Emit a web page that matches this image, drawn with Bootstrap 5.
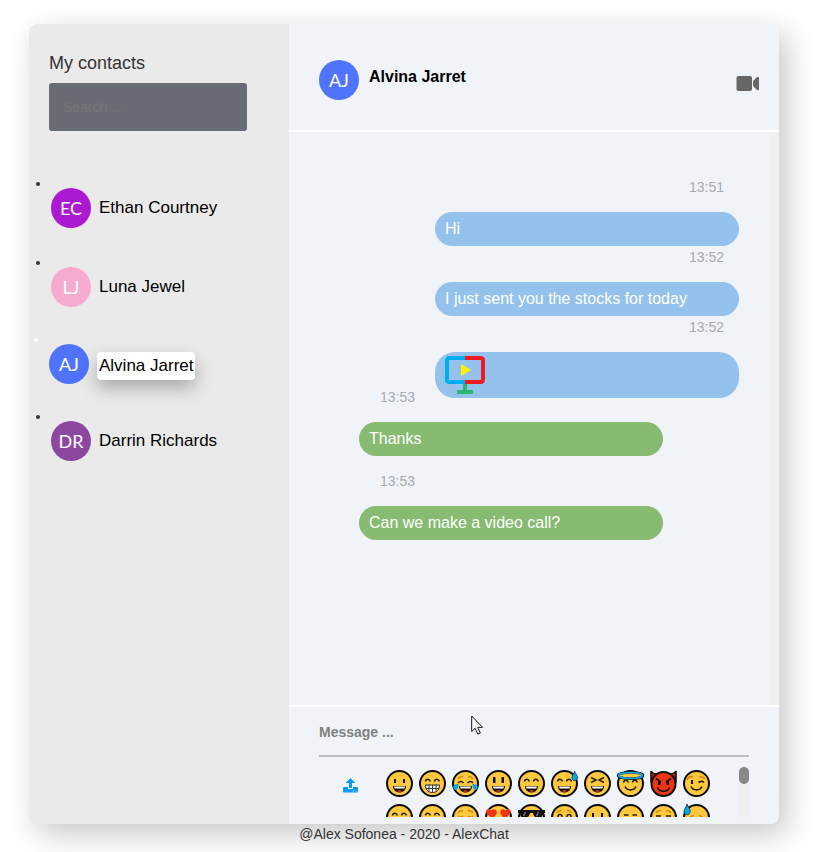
<!DOCTYPE html>
<html lang="en">
<head>
<meta charset="utf-8">
<meta name="viewport" content="width=device-width, initial-scale=1">
<title>AlexChat</title>
<link href="https://cdn.jsdelivr.net/npm/bootstrap@5.3.0/dist/css/bootstrap.min.css" rel="stylesheet">
<style>
body{font-family:"Liberation Sans",Arial,sans-serif;font-size:14px;line-height:20px;color:#333;background:#fff}
.page{padding:24px 43px 8px 29px}
.chat-app{border-radius:8px;box-shadow:8px 10px 30px rgba(0,0,0,.22);background:#f0f4f9;min-height:800px}
.contacts{flex:0 0 260px;background:#eaeaea;border-radius:8px 0 0 8px;padding:29px 20px 20px}
.contacts h1{font-size:18px;line-height:20px;font-weight:400;margin-bottom:10px}
.search{height:48px;width:198px;border:0;border-radius:3px;background:#6a6c75;padding:0 14px;font-size:14px;color:#fff}
.search::placeholder{color:#757575;opacity:1}
.people{margin-top:55px;gap:35px}
.people li{position:relative}
.people a{font-size:17px;line-height:24px;color:#000;gap:8px;padding:2px}
.people li::before{content:"";position:absolute;left:-13px;top:-4px;width:4px;height:4px;border-radius:50%;background:#333}
.people li.current::before{left:-15px;background:#fff;top:-6px}
.people .current a{padding:0}
.people .current .person{background:#fff;padding:2px;border-radius:4px;margin-top:4px;box-shadow:0 8px 18px rgba(0,0,0,.28)}
.avatar{flex:none;width:40px;height:40px;border-radius:50%;color:#fff;font:18px/40px Lato,"Open Sans",sans-serif;text-align:center}
.a-ec{background:#ab1ad1}.a-lj{background:#f7abd0}.a-aj{background:#4f74fb}.a-dr{background:#8c479f}
.chat-head{padding:36px 20px 30px 30px;border-bottom:2px solid #fff;gap:10px}
.chat-head h2{font-size:16px;line-height:20px;font-weight:700;color:#000;margin:7px 0 0}
.video{margin-top:14px;color:#666}
.history{border-right:10px solid #f0f0f0;padding:45px 30px 30px 70px}
.time{color:#a8aab1;margin:0 15px 15px 21px}
.bubble{width:80%;border-radius:20px;padding:5px 10px;font-size:16px;line-height:24px;color:#fff}
.sent{margin-bottom:1px}
.sent .bubble{background:#94c2ed}
.sent.media{margin-bottom:-11px}
.media .bubble{padding:4px 10px 2px}
.received{margin-bottom:15px}
.received .bubble{background:#86bb71}
.composer{border-top:2px solid #fff;padding:10px 30px 7px}
.message{width:100%;height:40px;border:0;border-bottom:2px solid #bfbdbe;background:transparent;padding:0 0 8px;font-size:14px;font-weight:700;color:#444;border-radius:0}
.message::placeholder{color:#808080;opacity:1}
.tools{height:50px;margin-top:10px;overflow:hidden}
.upload{margin:11px 28px 0 24px;color:#0a98ff}
.emojis{display:grid;grid-template-columns:repeat(auto-fill,27px);gap:7px 6px;padding-top:3px;flex:1 1 0}
.emojis button{width:27px;height:27px}
.emojis svg{display:block;width:27px;height:27px;overflow:visible}
.track{width:10px;background:#f0f0f0}
.thumb{height:17px;border-radius:5px;background:#888}
.pointer{position:absolute;left:182px;top:8px}
button{border:0;background:none;padding:0}
</style>
<script src="https://cdn.jsdelivr.net/npm/bootstrap@5.3.0/dist/js/bootstrap.bundle.min.js"></script>
</head>
<body>
<svg width="0" height="0" class="position-absolute" aria-hidden="true">
<defs>
<g id="face"><circle cx="13.5" cy="13.5" r="12.5" fill="#ffc83d" stroke="#0c0c0c" stroke-width="2"/></g>
<g id="grin"><path d="M7 16h13c0 4-3 6.500-6.500 6.500S7 20 7 16z" fill="#111"/><path d="M8 16.500h11l-.6 2H8.600z" fill="#fff"/><path d="M11 21.300c1-1.500 4-1.500 5 0-1 .7-4 .7-5 0z" fill="#ef3a18"/></g>
<g id="arcs" fill="none" stroke="#222" stroke-width="1.500"><path d="M6.500 11.500c.5-3 4-3 5 0M15.500 11.500c.5-3 4-3 5 0"/></g>
<g id="brows" fill="none" stroke="#d08a10" stroke-width="1.500"><path d="M6 9c1-2 3-2.500 5-2.500M16 6.500c2 0 4 .5 5 2.500"/></g>
<g id="smile"><path d="M8 16.500c2 4.500 9 4.500 11 0" fill="none" stroke="#222" stroke-width="1.600"/></g>
</defs>
</svg>
<div class="page">
<main class="chat-app d-flex">
  <aside class="contacts">
    <h1><label for="search">My contacts</label></h1>
    <input class="search" id="search" type="text" placeholder="Search ...">
    <ul class="people list-unstyled d-flex flex-column mb-0">
      <li><a href="#" class="d-flex align-items-center text-decoration-none"><span class="avatar a-ec">EC</span><span class="person">Ethan Courtney</span></a></li>
      <li><a href="#" class="d-flex align-items-center text-decoration-none"><span class="avatar a-lj">LJ</span><span class="person">Luna Jewel</span></a></li>
      <li class="current"><a href="#" class="d-flex align-items-center text-decoration-none" aria-current="true"><span class="avatar a-aj">AJ</span><span class="person">Alvina Jarret</span></a></li>
      <li><a href="#" class="d-flex align-items-center text-decoration-none"><span class="avatar a-dr">DR</span><span class="person">Darrin Richards</span></a></li>
    </ul>
  </aside>
  <section class="flex-grow-1 d-flex flex-column">
    <header class="chat-head d-flex align-items-start">
      <span class="avatar a-aj">AJ</span>
      <h2>Alvina Jarret</h2>
      <button class="video ms-auto" type="button" aria-label="Video call"><svg class="d-block" width="23" height="20" viewBox="0 0 23 20" fill="currentColor"><rect x=".5" y="2" width="15.500" height="15" rx="2"/><path d="M17 7.200 20.700 3.200Q23 1.800 23 4v11q0 2.200-2.300.8L17 11.800z"/></svg></button>
    </header>
    <div class="history flex-grow-1 d-flex flex-column">
      <div class="sent d-flex flex-column align-items-end"><time class="time">13:51</time><div class="bubble">Hi</div></div>
      <div class="sent d-flex flex-column align-items-end"><time class="time">13:52</time><div class="bubble">I just sent you the stocks for today</div></div>
      <div class="sent media d-flex flex-column align-items-end"><time class="time">13:52</time><div class="bubble"><svg class="d-block" width="40" height="40" viewBox="0 0 40 40" role="img" aria-label="Video"><path d="M18 27h4v7h6v4H12v-4h6z" fill="#2bb673"/><path d="M20 2H4.500Q2 2 2 4.500v19Q2 26 4.500 26H20" fill="none" stroke="#00aeef" stroke-width="4"/><path d="M20 2h15.500Q38 2 38 4.500v19q0 2.500-2.500 2.500H20" fill="none" stroke="#ed1c24" stroke-width="4"/><path d="M16 8v12l10-6z" fill="#fff200"/></svg></div></div>
      <div class="received"><time class="time d-block">13:53</time><div class="bubble">Thanks</div></div>
      <div class="received"><time class="time d-block">13:53</time><div class="bubble">Can we make a video call?</div></div>
    </div>
    <footer class="composer position-relative">
      <input class="message d-block" type="text" placeholder="Message ..." aria-label="Message">
      <div class="tools d-flex">
        <button class="upload align-self-start" type="button" aria-label="Upload file"><svg class="d-block" width="15" height="15" viewBox="0 0 15 15" fill="currentColor"><path d="M7.500 0 12.300 5H9v5H6V5H2.700z"/><path d="M1 9h4v2h5V9h4q1 0 1 1v3.500q0 1-1 1H1q-1 0-1-1V10q0-1 1-1z"/><path d="M10 12.500h1v1h-1zM12.500 12.500h1v1h-1z" fill="#f0f4f9"/></svg></button>
        <div class="emojis">
          <button type="button" aria-label="Grinning"><svg viewBox="0 0 27 27"><use href="#face"/><path d="M8 9h2v4H8zM17 9h2v4h-2z" fill="#111"/><use href="#grin"/></svg></button>
          <button type="button" aria-label="Beaming"><svg viewBox="0 0 27 27"><use href="#face"/><use href="#arcs"/><path d="M6.500 15h14c0 5-3 7.500-7 7.500s-7-2.500-7-7.500z" fill="#fff" stroke="#222"/><path d="M7 18.500h13M10 15v6.500M13.500 15v7M17 15v6.500" stroke="#333"/></svg></button>
          <button type="button" aria-label="Tears of joy"><svg viewBox="0 0 27 27"><use href="#face"/><use href="#brows"/><path d="M6 13c2-2 4-2 5.500 0M15.500 13c2-2 4-2 5.500 0" fill="none" stroke="#222" stroke-width="1.500"/><use href="#grin"/><path d="M1.500 19c-1-4 2-5 5-5 0 3-1 6-3 6zM25.500 19c1-4-2-5-5-5 0 3 1 6 3 6z" fill="#00a8f3"/></svg></button>
          <button type="button" aria-label="Big eyes"><svg viewBox="0 0 27 27"><use href="#face"/><path d="M8 7h2.500v6H8zM16.500 7H19v6h-2.500z" fill="#111"/><use href="#grin"/></svg></button>
          <button type="button" aria-label="Smiling eyes"><svg viewBox="0 0 27 27"><use href="#face"/><use href="#arcs"/><use href="#grin"/></svg></button>
          <button type="button" aria-label="Sweat"><svg viewBox="0 0 27 27"><use href="#face"/><use href="#arcs"/><use href="#grin"/><path d="M23.500 1c1 3 3.500 4.500 3 7.500-1 3.500-6 2.500-5.500-1C21.200 5 23 3.500 23.500 1z" fill="#00a8f3" stroke="#111" stroke-width=".6"/></svg></button>
          <button type="button" aria-label="Squinting"><svg viewBox="0 0 27 27"><use href="#face"/><path d="m7 7.500 5 2.500-5 2.500M20 7.500 15 10l5 2.500" fill="none" stroke="#222" stroke-width="1.500"/><use href="#grin"/></svg></button>
          <button type="button" aria-label="Halo"><svg viewBox="0 0 27 27"><use href="#face"/><ellipse cx="13.500" cy="5.500" rx="12.500" ry="3.300" fill="#ffc83d" stroke="#111" stroke-width="2.600"/><ellipse cx="13.500" cy="5.500" rx="12" ry="3" fill="none" stroke="#00a8f3" stroke-width="1.700"/><g transform="translate(0 1)"><use href="#arcs"/></g><use href="#smile"/></svg></button>
          <button type="button" aria-label="Devil"><svg viewBox="0 0 27 27"><path d="M1 11V1c1 2 4 3 7 3zM26 11V1c-1 2-4 3-7 3z" fill="#b52411" stroke="#111" stroke-width="1.600"/><circle cx="13.500" cy="14" r="12" fill="#ef3516" stroke="#111" stroke-width="2"/><path d="m6 8.500 5 3.500M21 8.500l-5 3.500" stroke="#111" stroke-width="1.600"/><path d="M8 11h2.500v4H8zM16.500 11H19v4h-2.500z" fill="#111"/><path d="M7.500 17.500c2 5 10 5 12 0" fill="none" stroke="#111" stroke-width="1.600"/></svg></button>
          <button type="button" aria-label="Wink"><svg viewBox="0 0 27 27"><use href="#face"/><path d="M4 10c1-3 3-4 6-3M16 7c2-1 4 0 6 2" fill="none" stroke="#d08a10" stroke-width="1.600"/><path d="M8 10h2v4H8z" fill="#111"/><path d="M15.500 12.500c2-1.500 4-1.500 5.500 0" fill="none" stroke="#222" stroke-width="1.600"/><use href="#smile"/></svg></button>
          <button type="button" aria-label="Blushing"><svg viewBox="0 0 27 27"><use href="#face"/><use href="#arcs"/><use href="#smile"/></svg></button>
          <button type="button" aria-label="Savoring"><svg viewBox="0 0 27 27"><use href="#face"/><use href="#arcs"/><use href="#smile"/></svg></button>
          <button type="button" aria-label="Relieved"><svg viewBox="0 0 27 27"><use href="#face"/><use href="#brows"/><path d="M6 12c2 1.500 4 1.500 5 0M16 12c2 1.500 4 1.500 5 0" fill="none" stroke="#d08a10" stroke-width="1.500"/><use href="#smile"/></svg></button>
          <button type="button" aria-label="Heart eyes"><svg viewBox="0 0 27 27"><use href="#face"/><path d="M7.500 15 2 10C-.5 5 4.500 3.500 6.500 6.500 9 3.500 13 6 11.500 10zM19.500 15 25 10c2.500-5-2.500-6.500-4.500-3.500C18 3.500 14 6 15.500 10z" fill="#ef3516"/></svg></button>
          <button type="button" aria-label="Sunglasses"><svg viewBox="0 0 27 27"><use href="#face"/><path d="M0 6h27v3h-2c0 7-9 7-10 0h-3c-1 7-10 7-10 0H0z" fill="#111"/><path d="m5.500 12 2-4M18.500 12l2-4" stroke="#777" stroke-width="1.400"/></svg></button>
          <button type="button" aria-label="Flushed"><svg viewBox="0 0 27 27"><use href="#face"/><use href="#brows"/><circle cx="9" cy="12.500" r="2" fill="none" stroke="#222" stroke-width="1.500"/><circle cx="18" cy="12.500" r="2" fill="none" stroke="#222" stroke-width="1.500"/></svg></button>
          <button type="button" aria-label="Neutral"><svg viewBox="0 0 27 27"><use href="#face"/><path d="M8 9h2v4H8zM17 9h2v4h-2z" fill="#111"/></svg></button>
          <button type="button" aria-label="Expressionless"><svg viewBox="0 0 27 27"><use href="#face"/><path d="M7 11h4.500M15.500 11H20" stroke="#222" stroke-width="1.600"/></svg></button>
          <button type="button" aria-label="Unamused"><svg viewBox="0 0 27 27"><use href="#face"/><use href="#brows"/><path d="M6 12h5M16 12h5" stroke="#222" stroke-width="1.600"/></svg></button>
          <button type="button" aria-label="Cold sweat"><svg viewBox="0 0 27 27"><use href="#face"/><path d="M4 0c1 3 4 5 3 8.500-1 3.500-6 2.500-6-1C1 5 3.500 3 4 0z" fill="#00a8f3" stroke="#111" stroke-width=".7"/><path d="M7 13c2 0 3-1 4-2M16 11c1 1 2 2 4 2" fill="none" stroke="#d08a10" stroke-width="1.500"/></svg></button>
        </div>
        <div class="track" aria-hidden="true"><div class="thumb"></div></div>
      </div>
      <svg class="pointer" width="13" height="20" viewBox="0 0 13 20" aria-hidden="true"><path d="M.7 1v15.500l3.500-3.300 2.600 5.900 2.500-1.100-2.600-5.700h4.800z" fill="#fff" stroke="#111"/></svg>
    </footer>
  </section>
</main>
<div class="text-center">@Alex Sofonea - 2020 - AlexChat</div>
</div>
</body>
</html>
